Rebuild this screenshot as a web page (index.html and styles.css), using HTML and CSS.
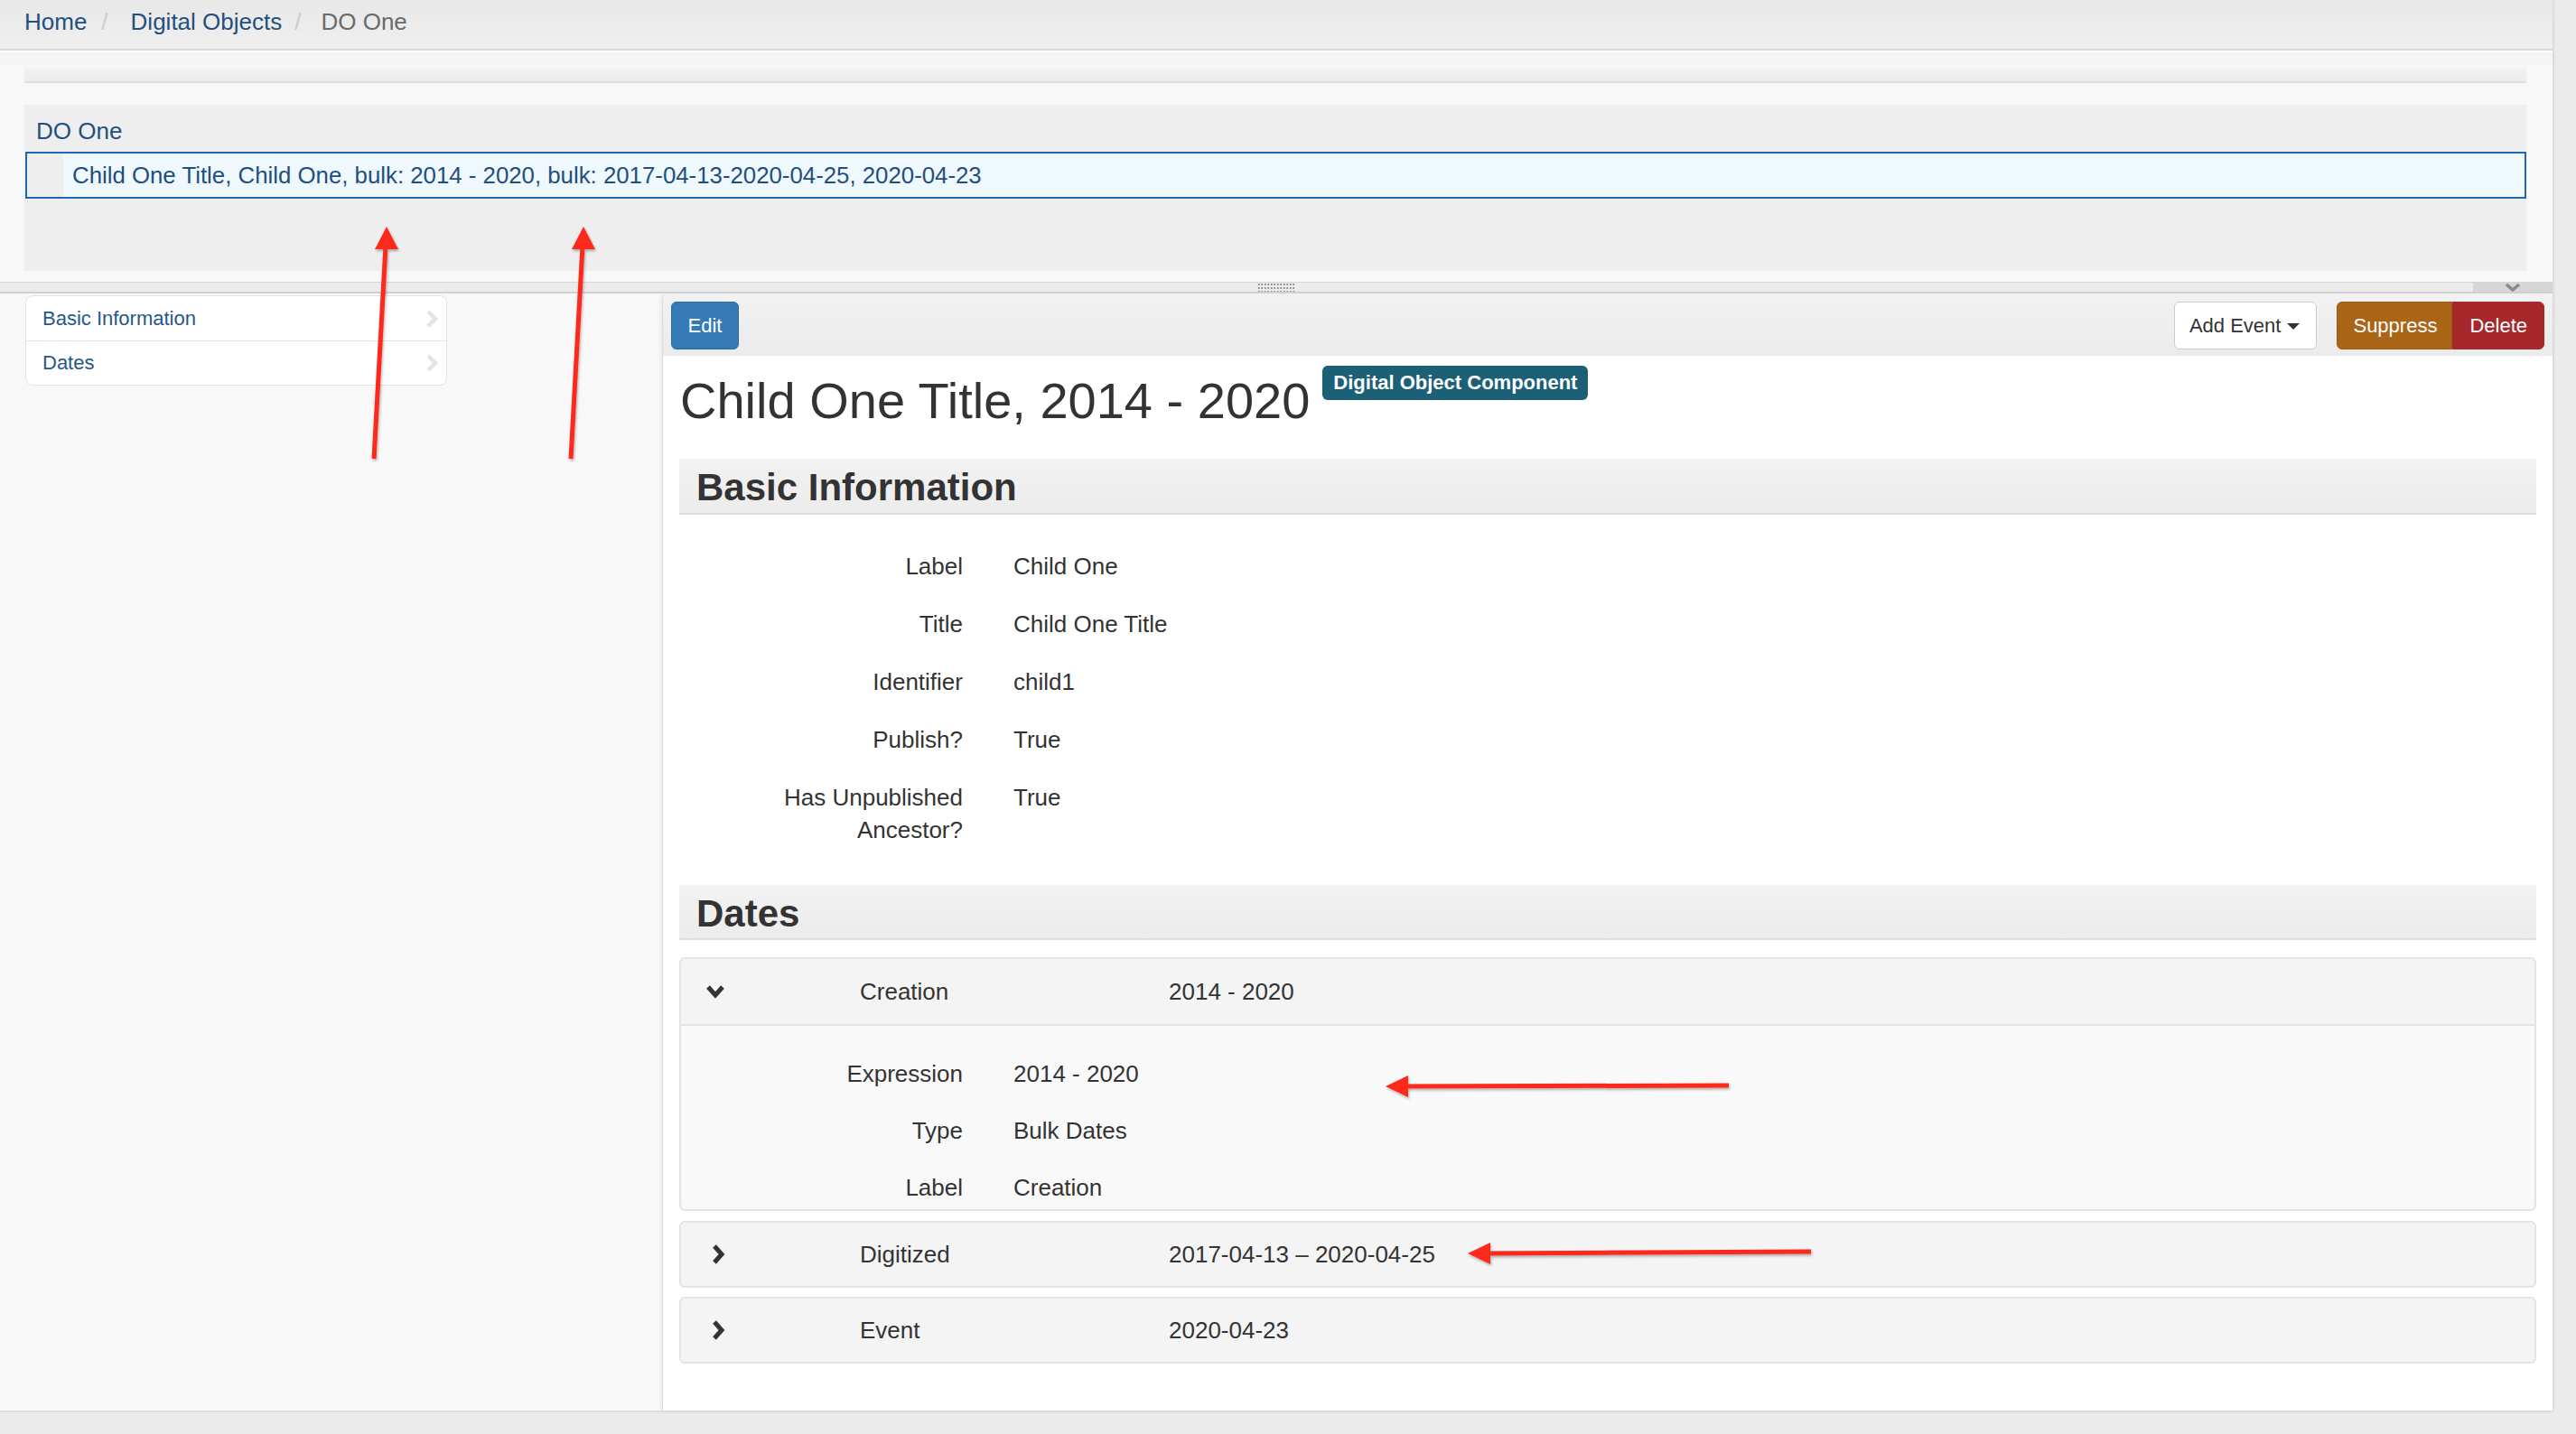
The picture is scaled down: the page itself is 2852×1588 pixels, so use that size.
FILE: index.html
```html
<!DOCTYPE html>
<html lang="en">
<head>
<meta charset="utf-8">
<title>DO One</title>
<link rel="stylesheet" href="styles.css">
</head>
<body>
<div class="page">
  <div class="crumbs">
    <a class="crumb" href="#">Home</a><span class="sep">/</span>
    <a class="crumb" href="#">Digital Objects</a><span class="sep sep2">/</span>
    <span class="crumb active">DO One</span>
  </div>

  <div class="tree-area">
    <div class="tree-toolbar"></div>
    <div class="tree">
      <div class="tree-root">DO One</div>
      <div class="tree-row selected">
        <span class="indent"></span>
        <span class="tree-title">Child One Title, Child One, bulk: 2014 - 2020, bulk: 2017-04-13-2020-04-25, 2020-04-23</span>
      </div>
    </div>
  </div>

  <div class="resize-bar">
    <span class="handle"></span>
    <span class="collapse">
      <svg width="18" height="10" viewBox="0 0 18 10"><polyline points="2,2 9,8 16,2" fill="none" stroke="#8a8a8a" stroke-width="3.5"/></svg>
    </span>
  </div>

  <div class="content">
    <aside class="sidebar">
      <ul class="side-nav">
        <li><a href="#">Basic Information</a><svg class="nav-chev" width="14" height="22" viewBox="0 0 14 22"><polyline points="3,3 11,11 3,19" fill="none" stroke="#e4e4e4" stroke-width="4.5"/></svg></li>
        <li><a href="#">Dates</a><svg class="nav-chev" width="14" height="22" viewBox="0 0 14 22"><polyline points="3,3 11,11 3,19" fill="none" stroke="#e4e4e4" stroke-width="4.5"/></svg></li>
      </ul>
    </aside>

    <main class="record">
      <div class="toolbar">
        <button class="btn btn-edit">Edit</button>
        <div class="toolbar-right">
          <button class="btn btn-default">Add Event<span class="caret"></span></button>
          <div class="btn-group">
            <button class="btn btn-suppress">Suppress</button>
            <button class="btn btn-delete">Delete</button>
          </div>
        </div>
      </div>

      <div class="title-row">
        <h1 class="record-title">Child One Title, 2014 - 2020</h1>
        <span class="badge">Digital Object Component</span>
      </div>

      <section class="section">
        <h2 class="section-head">Basic Information</h2>
        <div class="dl basic">
          <div class="dl-row"><div class="dt">Label</div><div class="dd">Child One</div></div>
          <div class="dl-row"><div class="dt">Title</div><div class="dd">Child One Title</div></div>
          <div class="dl-row"><div class="dt">Identifier</div><div class="dd">child1</div></div>
          <div class="dl-row"><div class="dt">Publish?</div><div class="dd">True</div></div>
          <div class="dl-row"><div class="dt">Has Unpublished Ancestor?</div><div class="dd">True</div></div>
        </div>
      </section>

      <section class="section dates">
        <h2 class="section-head">Dates</h2>

        <div class="panel open first">
          <div class="panel-head">
            <span class="chev"><svg width="22" height="16" viewBox="0 0 22 16"><polyline points="3,3 11,12 19,3" fill="none" stroke="#333" stroke-width="5"/></svg></span>
            <span class="ph-label">Creation</span>
            <span class="ph-date">2014 - 2020</span>
          </div>
          <div class="panel-body dl">
            <div class="dl-row"><div class="dt">Expression</div><div class="dd">2014 - 2020</div></div>
            <div class="dl-row"><div class="dt">Type</div><div class="dd">Bulk Dates</div></div>
            <div class="dl-row"><div class="dt">Label</div><div class="dd">Creation</div></div>
          </div>
        </div>

        <div class="panel">
          <div class="panel-head">
            <span class="chev"><svg width="16" height="22" viewBox="0 0 16 22"><polyline points="4,2 12,11 4,20" fill="none" stroke="#333" stroke-width="5"/></svg></span>
            <span class="ph-label">Digitized</span>
            <span class="ph-date">2017-04-13 – 2020-04-25</span>
          </div>
        </div>

        <div class="panel last">
          <div class="panel-head">
            <span class="chev"><svg width="16" height="22" viewBox="0 0 16 22"><polyline points="4,2 12,11 4,20" fill="none" stroke="#333" stroke-width="5"/></svg></span>
            <span class="ph-label">Event</span>
            <span class="ph-date">2020-04-23</span>
          </div>
        </div>
      </section>
    </main>
  </div>
</div>

<svg class="annotations" width="2852" height="1588" viewBox="0 0 2852 1588">
  <defs>
    <filter id="sh" x="-20%" y="-20%" width="140%" height="140%">
      <feDropShadow dx="1" dy="2" stdDeviation="1.5" flood-color="#000" flood-opacity="0.3"/>
    </filter>
  </defs>
  <g filter="url(#sh)" fill="#fd2a1c" stroke="#fd2a1c">
    <line x1="414" y1="508" x2="427" y2="272" stroke-width="5"/>
    <polygon points="428,251 415,276 441,276" stroke="none"/>
    <line x1="632" y1="508" x2="645" y2="272" stroke-width="5"/>
    <polygon points="646,251 633,276 659,276" stroke="none"/>
    <line x1="1914" y1="1202" x2="1554" y2="1203" stroke-width="5"/>
    <polygon points="1534,1203 1559,1191 1559,1215" stroke="none"/>
    <line x1="2005" y1="1386" x2="1645" y2="1388" stroke-width="5"/>
    <polygon points="1625,1388 1650,1376 1650,1400" stroke="none"/>
  </g>
</svg>
</body>
</html>
```

FILE: styles.css
```css
* { box-sizing: border-box; }

html, body {
  margin: 0;
  padding: 0;
}

body {
  background: #ebebeb;
  font-family: "Liberation Sans", Arial, Helvetica, sans-serif;
  font-size: 26px;
  color: #333;
  width: 2852px;
  height: 1588px;
  overflow: hidden;
  position: relative;
}

a { text-decoration: none; color: #22507f; }

.page {
  width: 2826px;
  background: #f8f8f8;
  box-shadow: 0 0 4px rgba(0, 0, 0, 0.18);
}

/* breadcrumb */
.crumbs {
  height: 56px;
  padding: 0 0 0 27px;
  display: flex;
  align-items: center;
  padding-bottom: 6px;
  background: linear-gradient(#e8e8e8, #efefef);
  border-bottom: 2px solid #dadada;
}
.crumb { color: #23507e; }
.crumb.active { color: #6a6a6a; }
.sep { color: #cccccc; margin: 0 25px 0 16px; }
.sep.sep2 { margin: 0 22px 0 14px; }

/* tree */
.tree-area {
  border-top: 2px solid #ffffff;
  background: linear-gradient(#f3f3f3, #f8f8f8 18px);
  padding: 17px 29px 12px 27px;
}
.tree-toolbar {
  height: 17px;
  background: linear-gradient(#f1f1f1, #ececec);
  border-bottom: 2px solid #dedede;
}
.tree {
  margin-top: 24px;
  height: 184px;
  background: #eeeeee;
}
.tree-root {
  padding: 6px 0 0 13px;
  height: 52px;
  line-height: 46px;
  color: #23507e;
}
.tree-row.selected {
  margin-left: 1px;
  height: 52px;
  display: flex;
  border: 2px solid #1c69ad;
  background: #eef8fd;
}
.indent { width: 40px; background: #eeeeee; flex: none; }
.tree-title {
  padding-left: 10px;
  line-height: 48px;
  color: #1f4f7e;
  white-space: nowrap;
  font-size: 25.8px;
}

/* resize bar */
.resize-bar {
  height: 13px;
  border-top: 1px solid #d6d6d6;
  border-bottom: 2px solid #d0d0d0;
  background: #ececec;
  display: flex;
  justify-content: center;
  position: relative;
}
.handle {
  width: 42px;
  height: 10px;
  background-image: radial-gradient(circle, #8c8c8c 1.1px, transparent 1.4px);
  background-size: 3.5px 4px;
}
.collapse {
  position: absolute;
  right: 0;
  top: 0;
  width: 88px;
  height: 10px;
  background: #d6d6d6;
  display: flex;
  justify-content: center;
  align-items: center;
}

/* content */
.content {
  display: flex;
  align-items: stretch;
}
.sidebar {
  width: 733px;
  flex: none;
  padding: 2px 0 0 28px;
}
.side-nav {
  list-style: none;
  margin: 0;
  padding: 0;
  width: 467px;
  background: #fff;
  border: 1px solid #e3e3e3;
  border-radius: 8px;
}
.side-nav li {
  height: 49px;
  display: flex;
  align-items: center;
  justify-content: space-between;
  padding: 0 9px 0 18px;
  font-size: 22px;
}
.side-nav li + li { border-top: 1px solid #e3e3e3; height: 49px; }
.side-nav a { color: #27578a; }

.record {
  flex: 1;
  background: #fff;
  border-left: 1px solid #dcdcdc;
  border-top-left-radius: 6px;
  box-shadow: -2px 0 4px rgba(0, 0, 0, 0.06);
  padding-bottom: 52px;
}

.toolbar {
  height: 69px;
  padding: 9px 9px 0 9px;
  display: flex;
  justify-content: space-between;
  align-items: flex-start;
  background: linear-gradient(#f2f2f2, #ebebeb);
  border-top-left-radius: 6px;
}
.toolbar-right { display: flex; gap: 22px; }
.btn {
  height: 53px;
  font-family: inherit;
  font-size: 22px;
  border-radius: 6px;
  border: 1px solid transparent;
  padding: 0 17px;
  cursor: pointer;
  color: #fff;
}
.btn-edit { width: 75px; padding: 0; background: #337ab7; border-color: #2e6da4; }
.btn-default { background: #fff; color: #333; border-color: #cccccc; padding: 0 18px 0 16px; }
.caret {
  display: inline-block;
  width: 0;
  height: 0;
  margin-left: 7px;
  vertical-align: middle;
  border-top: 7px solid #333;
  border-left: 7px solid transparent;
  border-right: 7px solid transparent;
}
.btn-group { display: flex; }
.btn-suppress {
  background: #ab6517;
  border-color: #9a5a12;
  border-radius: 6px 0 0 6px;
  padding: 0 16px 0 17px;
}
.btn-delete {
  background: #a6282a;
  border-color: #a6282a;
  border-radius: 0 6px 6px 0;
  padding: 0 18px;
}

.title-row {
  display: flex;
  align-items: flex-start;
  gap: 14px;
  padding: 11px 19px 0 19px;
}
.record-title {
  margin: 8px 0 0 0;
  font-size: 56px;
  font-weight: normal;
  line-height: 62px;
  color: #333;
}
.badge {
  height: 38px;
  line-height: 38px;
  padding: 0 12px;
  background: #1b6076;
  color: #fff;
  font-size: 22px;
  font-weight: bold;
  border-radius: 6px;
}

.section { margin: 33px 18px 0 18px; }
.section.dates { margin-top: 43px; }
.section-head {
  margin: 0;
  height: 62px;
  padding: 3px 0 0 19px;
  line-height: 57px;
  font-size: 42px;
  font-weight: bold;
  color: #333;
  background: linear-gradient(#f2f2f2, #ececec);
  border-bottom: 2px solid #dddddd;
}
.dates .section-head { height: 61px; }

.dl {
  display: flex;
  flex-direction: column;
  line-height: 36px;
}
.dl.basic {
  padding: 39px 0 0 74px;
  gap: 28px;
}
.dl-row { display: flex; }
.dt {
  width: 240px;
  flex: none;
  text-align: right;
}
.dd { margin-left: 56px; }

.panel {
  margin-top: 10px;
  border: 2px solid #e3e3e3;
  border-radius: 6px;
  background: #f4f4f4;
}
.panel.first { margin-top: 19px; }
.panel.open + .panel { margin-top: 11px; }
.panel-head {
  height: 70px;
  display: flex;
  align-items: center;
}
.panel.first .panel-head { height: 72px; }
.chev {
  width: 198px;
  flex: none;
  padding-left: 27px;
  display: flex;
  align-items: center;
}
.panel:not(.first) .chev { padding-left: 33px; }
.ph-label { width: 342px; flex: none; }
.panel-body {
  border-top: 2px solid #e3e3e3;
  background: #f9f9f9;
  padding: 35px 0 6px 72px;
  gap: 27px;
  border-radius: 0 0 6px 6px;
}

.annotations {
  position: absolute;
  left: 0;
  top: 0;
  pointer-events: none;
}
```
